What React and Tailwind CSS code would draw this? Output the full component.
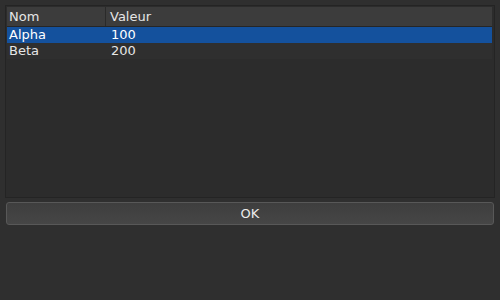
export default function App() {
  const rows = [
    { name: "Alpha", value: "100", selected: true },
    { name: "Beta", value: "200", selected: false },
  ];
  return (
    <div
      className="w-[500px] h-[300px] bg-[#2f2f2f] text-[#e6e6e6] text-[13px] flex flex-col px-[5px] pt-[5px]"
      style={{ fontFamily: '"DejaVu Sans", sans-serif' }}
    >
      <div className="h-[193px] border border-[#242424] bg-[#2c2c2c] p-px flex flex-col">
        <div className="flex h-[20px] bg-[#3c3c3c] border-b border-[#262626] mr-px">
          <div className="w-[99px] pl-[2px] flex items-center border-r border-[#2a2a2a]">
            Nom
          </div>
          <div className="flex-1 pl-[4px] flex items-center">Valeur</div>
        </div>
        {rows.map((r) => (
          <div
            key={r.name}
            className={
              "flex h-[16px] items-center mr-px " +
              (r.selected ? "bg-[#14519d] text-white" : "bg-[#2f2f2f]")
            }
          >
            <div className="w-[99px] pl-[2px]">{r.name}</div>
            <div className="flex-1 pl-[5px]">{r.value}</div>
          </div>
        ))}
      </div>
      <button
        type="button"
        className="mt-[4px] mx-px h-[23px] rounded-[3px] border border-[#585858] bg-gradient-to-b from-[#3e3e3e] to-[#464646] text-[#ececec] flex items-center justify-center"
      >
        OK
      </button>
    </div>
  );
}
